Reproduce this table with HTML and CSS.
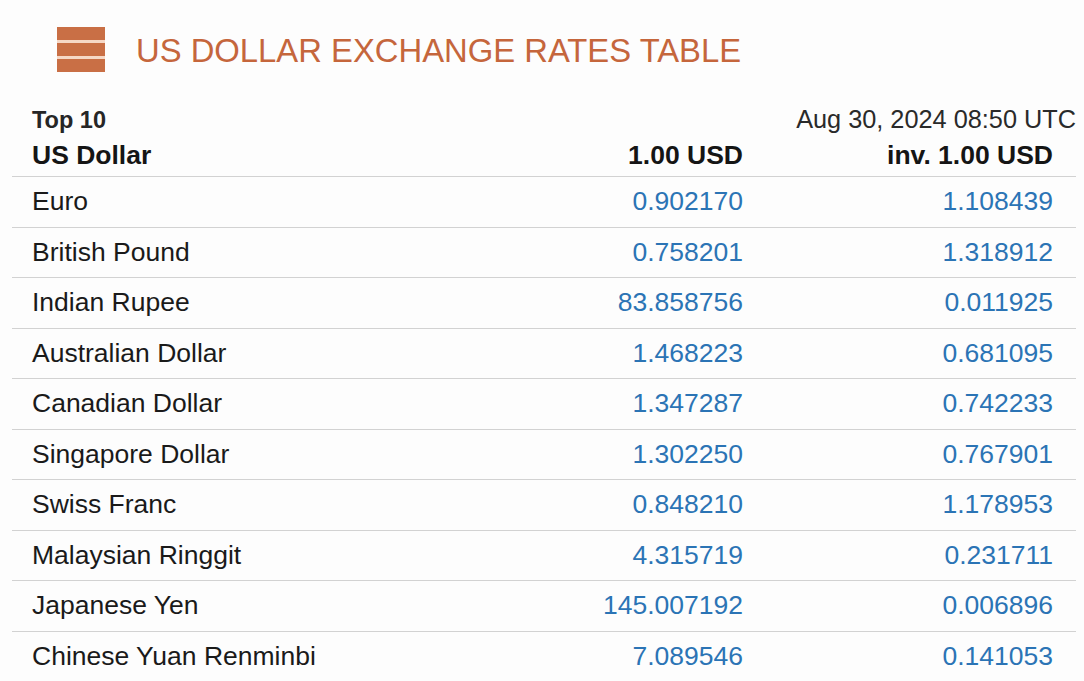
FILE: index.html
```html
<!DOCTYPE html>
<html>
<head>
<meta charset="utf-8">
<link rel="stylesheet" href="styles.css">
</head>
<body>
<div class="page">
  <div class="title-row">
    <div class="logo">
      <span class="bar"></span>
      <span class="bar"></span>
      <span class="bar"></span>
    </div>
    <h1 class="title">US DOLLAR EXCHANGE RATES TABLE</h1>
  </div>
  <table class="rates">
    <thead>
      <tr class="meta">
        <th class="c1 top">Top 10</th>
        <th class="c2"></th>
        <th class="c3 date">Aug 30, 2024 08:50 UTC</th>
      </tr>
      <tr class="heads">
        <th class="c1">US Dollar</th>
        <th class="c2">1.00 USD</th>
        <th class="c3">inv. 1.00 USD</th>
      </tr>
    </thead>
    <tbody>
      <tr><td class="c1">Euro</td><td class="c2 num">0.902170</td><td class="c3 num">1.108439</td></tr>
      <tr><td class="c1">British Pound</td><td class="c2 num">0.758201</td><td class="c3 num">1.318912</td></tr>
      <tr><td class="c1">Indian Rupee</td><td class="c2 num">83.858756</td><td class="c3 num">0.011925</td></tr>
      <tr><td class="c1">Australian Dollar</td><td class="c2 num">1.468223</td><td class="c3 num">0.681095</td></tr>
      <tr><td class="c1">Canadian Dollar</td><td class="c2 num">1.347287</td><td class="c3 num">0.742233</td></tr>
      <tr><td class="c1">Singapore Dollar</td><td class="c2 num">1.302250</td><td class="c3 num">0.767901</td></tr>
      <tr><td class="c1">Swiss Franc</td><td class="c2 num">0.848210</td><td class="c3 num">1.178953</td></tr>
      <tr><td class="c1">Malaysian Ringgit</td><td class="c2 num">4.315719</td><td class="c3 num">0.231711</td></tr>
      <tr><td class="c1">Japanese Yen</td><td class="c2 num">145.007192</td><td class="c3 num">0.006896</td></tr>
      <tr><td class="c1">Chinese Yuan Renminbi</td><td class="c2 num">7.089546</td><td class="c3 num">0.141053</td></tr>
    </tbody>
  </table>
</div>
</body>
</html>
```

FILE: styles.css
```css
html, body {
  margin: 0;
  padding: 0;
  background: #fdfdfd;
}
body {
  font-family: "Liberation Sans", Arial, sans-serif;
  color: #1f1f1f;
  width: 1084px;
  height: 681px;
  overflow: hidden;
}
.page {
  padding: 27px 8px 0 12px;
}
.title-row {
  display: flex;
  align-items: center;
  gap: 31px;
  padding-left: 45px;
  height: 45px;
}
.logo {
  width: 48px;
  height: 45px;
  display: flex;
  flex-direction: column;
  gap: 3px;
  background: #f6d8c6;
}
.logo .bar {
  flex: 1;
  background: #c96f45;
}
.title {
  margin: 0;
  font-weight: normal;
  font-size: 32.8px;
  color: #c5663c;
  position: relative;
  top: 1px;
}
.rates {
  margin-top: 33px;
  width: 1064px;
  border-collapse: collapse;
  font-size: 26.5px;
}
.rates th, .rates td {
  padding: 0;
  white-space: nowrap;
}
.c1 { text-align: left; padding-left: 20px !important; }
.c2 { text-align: right; width: 410px; }
.c3 { text-align: right; padding-right: 23px !important; width: 310px; }
.meta th {
  height: 28px;
  font-size: 25.3px;
  font-weight: normal;
  vertical-align: bottom;
}
.meta .top { font-weight: bold; color: #262626; font-size: 23.5px; }
.meta .date { padding-right: 0 !important; color: #2a2a2a; }
.heads th {
  height: 42px;
  font-weight: bold;
  color: #151515;
  border-bottom: 1px solid #d2d2d2;
  vertical-align: middle;
}
tbody td {
  height: 49.5px;
  border-bottom: 1px solid #d2d2d2;
  color: #1a1a1a;
}
tbody tr:last-child td { border-bottom: none; }
.num { color: #2b74b5; }
```
